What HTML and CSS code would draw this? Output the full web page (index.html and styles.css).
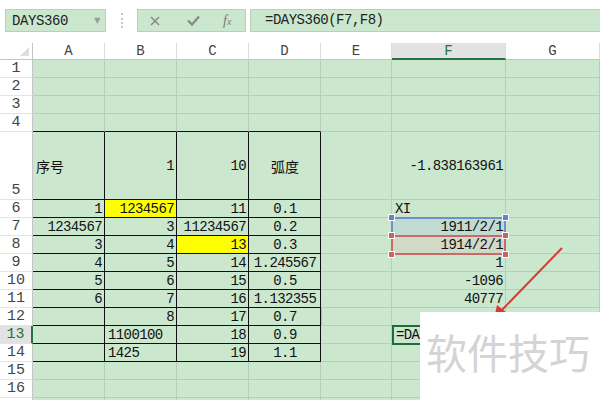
FILE: index.html
```html
<!DOCTYPE html>
<html>
<head>
<meta charset="utf-8">
<link rel="stylesheet" href="styles.css">
</head>
<body>
<div class="toolbar">
  <div class="namebox"><span>DAYS360</span><span class="caret">▼</span></div>
  <div class="sep"><span class="dots"></span></div>
  <div class="fxbox">
    <svg class="ic-x" width="10" height="10" viewBox="0 0 10 10"><path d="M1 1L9 9M9 1L1 9" stroke="#8a8a8a" stroke-width="1.6" fill="none"/></svg>
    <svg class="ic-ok" width="13" height="11" viewBox="0 0 13 11"><path d="M1 5.5L5 9.5L12 1.5" stroke="#8a8a8a" stroke-width="2.4" fill="none"/></svg>
    <span class="fx"><i>f</i><i class="fxs">x</i></span>
  </div>
  <div class="formula">=DAYS360(F7,F8)</div>
</div>

<div class="sheet">
  <div class="h corner"><span class="tri"></span></div><div class="h">A</div><div class="h">B</div><div class="h">C</div><div class="h">D</div><div class="h">E</div><div class="h hsel">F</div><div class="h">G</div>

  <div class="rh">1</div><div class="c"></div><div class="c"></div><div class="c"></div><div class="c"></div><div class="c"></div><div class="c"></div><div class="c"></div>
  <div class="rh">2</div><div class="c"></div><div class="c"></div><div class="c"></div><div class="c"></div><div class="c"></div><div class="c"></div><div class="c"></div>
  <div class="rh">3</div><div class="c"></div><div class="c"></div><div class="c"></div><div class="c"></div><div class="c"></div><div class="c"></div><div class="c"></div>
  <div class="rh">4</div><div class="c tb"></div><div class="c tb"></div><div class="c tb"></div><div class="c tb"></div><div class="c"></div><div class="c"></div><div class="c"></div>

  <div class="rh">5</div><div class="c t mid cjk">序号</div><div class="c t mid r">1</div><div class="c t mid r">10</div><div class="c t mid m cjk">弧度</div><div class="c"></div><div class="c mid r">-1.838163961</div><div class="c"></div>

  <div class="rh">6</div><div class="c t r">1</div><div class="c t r yel">1234567</div><div class="c t r">11</div><div class="c t m">0.1</div><div class="c"></div><div class="c l">XI</div><div class="c"></div>
  <div class="rh">7</div><div class="c t r">1234567</div><div class="c t r">3</div><div class="c t r">11234567</div><div class="c t m">0.2</div><div class="c"></div><div class="c r f7">1911/2/1</div><div class="c"></div>
  <div class="rh">8</div><div class="c t r">3</div><div class="c t r">4</div><div class="c t r yel">13</div><div class="c t m">0.3</div><div class="c"></div><div class="c r f8">1914/2/1</div><div class="c"></div>
  <div class="rh">9</div><div class="c t r">4</div><div class="c t r">5</div><div class="c t r">14</div><div class="c t m">1.245567</div><div class="c"></div><div class="c r">1</div><div class="c"></div>
  <div class="rh">10</div><div class="c t r">5</div><div class="c t r">6</div><div class="c t r">15</div><div class="c t m">0.5</div><div class="c"></div><div class="c r">-1096</div><div class="c"></div>
  <div class="rh">11</div><div class="c t r">6</div><div class="c t r">7</div><div class="c t r">16</div><div class="c t m">1.132355</div><div class="c"></div><div class="c r">40777</div><div class="c"></div>
  <div class="rh">12</div><div class="c t"></div><div class="c t r">8</div><div class="c t r">17</div><div class="c t m">0.7</div><div class="c tick"></div><div class="c"></div><div class="c"></div>
  <div class="rh rsel">13</div><div class="c t"></div><div class="c t l">1100100</div><div class="c t r">18</div><div class="c t m">0.9</div><div class="c"></div><div class="c l edit"><span class="edittext">=DAT</span></div><div class="c"></div>
  <div class="rh">14</div><div class="c t"></div><div class="c t l">1425</div><div class="c t r">19</div><div class="c t m">1.1</div><div class="c"></div><div class="c"></div><div class="c"></div>
  <div class="rh">15</div><div class="c"></div><div class="c"></div><div class="c"></div><div class="c"></div><div class="c"></div><div class="c"></div><div class="c"></div>
  <div class="rh">16</div><div class="c"></div><div class="c"></div><div class="c"></div><div class="c"></div><div class="c"></div><div class="c"></div><div class="c"></div>
  <div class="rh"></div><div class="c"></div><div class="c"></div><div class="c"></div><div class="c"></div><div class="c"></div><div class="c"></div><div class="c"></div>
</div>

<div class="ref ref-blue"><span class="hd tl"></span><span class="hd tr"></span></div>
<div class="ref ref-red"><span class="hd tl"></span><span class="hd tr"></span><span class="hd bl"></span><span class="hd br"></span></div>
<div class="editbox"></div>

<svg class="arrow" width="600" height="400" viewBox="0 0 600 400">
  <path d="M562 248L500 312" stroke="#d63a36" stroke-width="2" fill="none"/>
  <path d="M494 319L497 305L507 313Z" fill="#d63a36"/>
</svg>

<div class="watermark">软件技巧</div>
</body>
</html>
```

FILE: styles.css
```css
body {
  margin: 0;
  width: 600px;
  height: 400px;
  overflow: hidden;
  position: relative;
  background: #ffffff;
  font-family: "Liberation Mono", "DejaVu Sans Mono", monospace;
  font-size: 14px;
  color: #111;
}

.toolbar {
  height: 43px;
  box-sizing: border-box;
  padding: 9px 0 0 5px;
  display: flex;
  align-items: flex-start;
}

.namebox {
  width: 101px;
  height: 23px;
  box-sizing: border-box;
  border: 1px solid #b8cfba;
  background: #cbe7cd;
  display: flex;
  align-items: center;
  justify-content: space-between;
  padding: 0 5px 0 6px;
  letter-spacing: -0.4px;
  color: #222;
}

.caret {
  font-size: 8px;
  color: #9a9a9a;
  font-family: "DejaVu Sans", sans-serif;
}

.sep {
  width: 31px;
  height: 23px;
  display: flex;
  align-items: center;
  justify-content: center;
}

.dots {
  height: 15px;
  border-left: 2px dotted #c9c9c9;
}

.fxbox {
  width: 109px;
  height: 23px;
  box-sizing: border-box;
  border: 1px solid #b8cfba;
  background: #cbe7cd;
  display: flex;
  align-items: center;
  padding-left: 12px;
}

.ic-ok { margin-left: 27px; }

.fx {
  margin-left: 23px;
  font-family: "Liberation Serif", serif;
  font-size: 14px;
  color: #7a7a7a;
  letter-spacing: 0;
}

.fxs {
  font-size: 10px;
}

.formula {
  flex: 1;
  margin-left: 4px;
  height: 23px;
  box-sizing: border-box;
  border: 1px solid #b8cfba;
  border-right: none;
  background: #cbe7cd;
  padding-left: 14px;
  line-height: 21px;
  letter-spacing: -0.5px;
  color: #222;
}

.sheet {
  display: grid;
  grid-template-columns: 33px 72px 72px 72px 72px 71px 114px 94px;
  grid-template-rows: 17px 18px 18px 18px 18px 68px repeat(12, 18px);
}

.c {
  box-sizing: border-box;
  border-right: 1px solid #b5ceb7;
  border-bottom: 1px solid #b5ceb7;
  background: #cbe7cd;
  display: flex;
  align-items: flex-end;
  padding: 0 2px 0 3px;
  line-height: 16px;
  white-space: nowrap;
  overflow: hidden;
  letter-spacing: -0.6px;
}

.h {
  box-sizing: border-box;
  background: #ffffff;
  border-right: 1px solid #dcdcdc;
  border-bottom: 1px solid #c4c4c4;
  display: flex;
  align-items: center;
  justify-content: center;
  color: #444;
  font-size: 14px;
}

.corner {
  position: relative;
  border-right-color: #c4c4c4;
}

.tri {
  position: absolute;
  right: 3px;
  bottom: 3px;
  width: 0;
  height: 0;
  border-left: 9px solid transparent;
  border-bottom: 9px solid #dedede;
}

.hsel {
  background: #e2e2e2;
  border-bottom: 2px solid #217346;
  color: #217346;
}

.rh {
  box-sizing: border-box;
  background: #ffffff;
  border-right: 1px solid #c4c4c4;
  border-bottom: 1px solid #e4e4e4;
  display: flex;
  align-items: flex-end;
  justify-content: center;
  line-height: 17px;
  color: #444;
  font-size: 15px;
}

.rsel {
  background: #e2e2e2;
  border-right: 2px solid #217346;
  color: #217346;
}

.t { border-right-color: #111; border-bottom-color: #111; }
.tb { border-bottom-color: #111; }

.r { justify-content: flex-end; }
.l { justify-content: flex-start; }
.m { justify-content: center; }
.mid { align-items: center; }

.cjk {
  font-family: "Noto Sans CJK SC", sans-serif;
  font-size: 14px;
  letter-spacing: 0;
}

.yel { background: #ffff00; }
.f7 { background: #c1dad2; }
.f8 { background: #d1d9c7; }
.tick { box-shadow: inset 1px 0 0 #f2a08e; }
.edit { padding-left: 4px; }

.edittext {
  display: block;
  width: 24px;
  overflow: hidden;
}

.ref {
  position: absolute;
  box-sizing: border-box;
  left: 391px;
  width: 115px;
}

.ref-blue {
  top: 217px;
  height: 20px;
  border: 2px solid #6d92c9;
}

.ref-red {
  top: 235px;
  height: 20px;
  border: 2px solid #c76a6a;
}

.hd {
  position: absolute;
  width: 5px;
  height: 5px;
  border: 1px solid #fff;
}

.ref-blue .hd { background: #5f87c7; }
.ref-red .hd { background: #c86464; }
.tl { left: -5px; top: -5px; }
.tr { right: -5px; top: -5px; }
.bl { left: -5px; bottom: -5px; }
.br { right: -5px; bottom: -5px; }

.editbox {
  position: absolute;
  left: 392px;
  top: 325px;
  width: 114px;
  height: 20px;
  box-sizing: border-box;
  border: 2px solid #1f6b3a;
}

.arrow {
  position: absolute;
  left: 0;
  top: 0;
}

.watermark {
  position: absolute;
  left: 420px;
  top: 312px;
  right: 0;
  bottom: 0;
  background: #ffffff;
  font-family: "Noto Sans CJK SC", sans-serif;
  font-size: 41px;
  line-height: 41px;
  padding: 19px 0 0 6px;
  color: #d4d4d4;
  white-space: nowrap;
}
```
